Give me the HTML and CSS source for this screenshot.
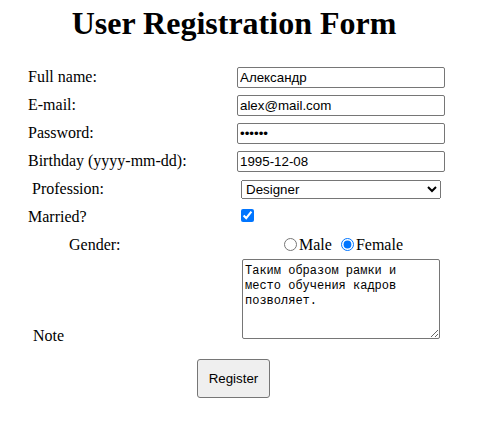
FILE: index.html
```html
<!DOCTYPE html>
<html>
<head>
<meta charset="utf-8">
<title>User Registration Form</title>
<link rel="stylesheet" href="styles.css">
</head>
<body>
<h1 class="title">User Registration Form</h1>
<form class="form">
  <div class="row"><label class="label">Full name:</label><input class="field" type="text" value="Александр"></div>
  <div class="row"><label class="label">E-mail:</label><input class="field" type="text" value="alex@mail.com"></div>
  <div class="row"><label class="label">Password:</label><input class="field" type="password" value="123456"></div>
  <div class="row"><label class="label">Birthday (yyyy-mm-dd):</label><input class="field" type="text" value="1995-12-08"></div>
  <div class="row"><label class="label label-indent">Profession:</label><select class="select"><option>Designer</option></select></div>
  <div class="row row-married"><label class="label label-shift">Married?</label><input class="check" type="checkbox" checked></div>
  <div class="row row-gender"><label class="label label-gender">Gender:</label><div class="radios"><input class="radio" type="radio" name="g">Male <input class="radio" type="radio" name="g" checked>Female</div></div>
  <div class="row row-note"><label class="label label-note">Note</label><textarea class="note">Таким образом рамки и место обучения кадров позволяет.</textarea></div>
  <div class="actions"><button class="btn" type="button">Register</button></div>
</form>
</body>
</html>
```

FILE: styles.css
```css
html, body {
  margin: 0;
  padding: 0;
  background: #fff;
}
body {
  font-family: "Liberation Serif", "Times New Roman", serif;
  font-size: 16px;
  color: #000;
}
.title {
  margin: 0 0 0 8px;
  padding-top: 5px;
  width: 452px;
  text-align: center;
  font-size: 32px;
  font-weight: bold;
  line-height: 37px;
}
.form {
  margin: 21px 0 0 28px;
}
.row {
  display: grid;
  grid-template-columns: 209px 208px;
  align-items: center;
  height: 28px;
}
.row-married {
  height: 25px;
}
.row-gender {
  height: 31px;
}
.row-note {
  height: 82px;
  align-items: start;
}
.label {
  line-height: 18px;
}
.label-shift {
  padding-top: 2px;
}
.label-indent {
  padding-left: 4px;
}
.label-gender {
  padding-left: 41px;
  padding-top: 2px;
}
.label-note {
  align-self: end;
  padding-left: 5px;
  margin-bottom: -4px;
}
.field {
  box-sizing: border-box;
  width: 208px;
  height: 21px;
  margin: 0;
  padding: 1px 2px;
  border: 1px solid #767676;
  border-radius: 2px;
  font-family: "Liberation Sans", Arial, sans-serif;
  font-size: 13.33px;
  color: #000;
  background: #fff;
}
.select {
  box-sizing: border-box;
  width: 200px;
  height: 19px;
  margin: 0 0 0 4px;
  font-family: "Liberation Sans", Arial, sans-serif;
  font-size: 13.33px;
  color: #000;
}
.check {
  width: 13px;
  height: 13px;
  margin: 0 0 0 4px;
  accent-color: #0075ff;
}
.radios {
  text-align: center;
  line-height: 18px;
  padding-top: 2px;
}
.radio {
  width: 13px;
  height: 13px;
  margin: 3px 2px 0 5px;
  vertical-align: -1px;
  accent-color: #0075ff;
}
.note {
  box-sizing: border-box;
  width: 198px;
  height: 80px;
  margin: 0 0 0 5px;
  padding: 4px 2px 2px;
  border: 1px solid #767676;
  border-radius: 2px;
  font-family: "Liberation Mono", "Courier New", monospace;
  font-size: 12px;
  line-height: 15px;
  color: #000;
  resize: both;
}
.actions {
  padding: 18px 0 0 169px;
}
.btn {
  box-sizing: border-box;
  width: 73px;
  height: 39px;
  padding: 0;
  border: 1px solid #767676;
  border-radius: 3px;
  background: #efefef;
  font-family: "Liberation Sans", Arial, sans-serif;
  font-size: 13.33px;
  color: #000;
}
```
